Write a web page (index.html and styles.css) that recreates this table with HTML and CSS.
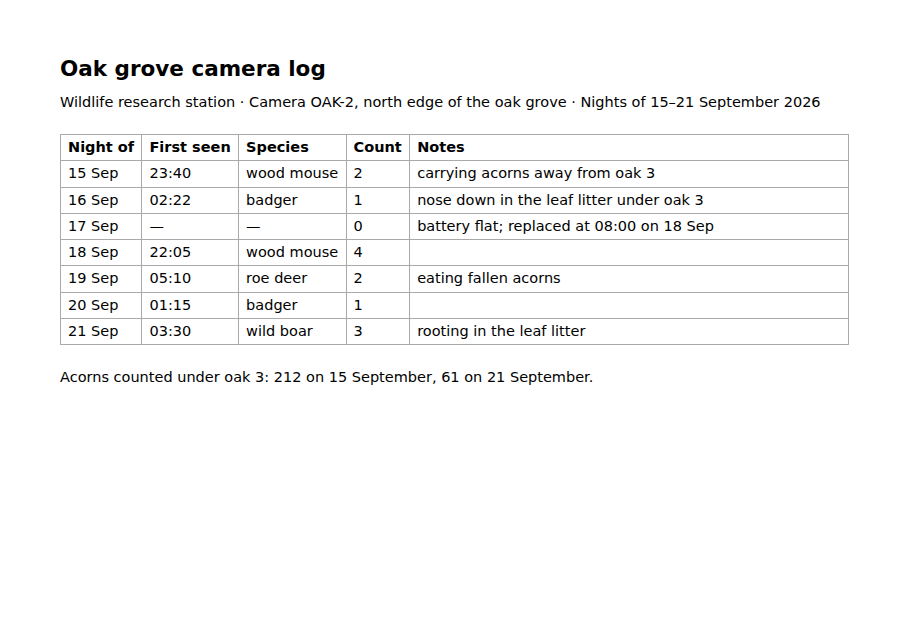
FILE: index.html
```html
<!DOCTYPE html>
<html lang="en">
<head>
<meta charset="utf-8">
<title>Oak grove camera log</title>
<link rel="stylesheet" href="styles.css">
</head>
<body>
<main class="page">
  <h1 class="title">Oak grove camera log</h1>
  <p class="subtitle">Wildlife research station · Camera OAK-2, north edge of the oak grove · Nights of 15–21 September 2026</p>
  <table class="log">
    <thead>
      <tr><th class="fit">Night of</th><th class="fit">First seen</th><th class="fit">Species</th><th class="fit">Count</th><th>Notes</th></tr>
    </thead>
    <tbody>
      <tr><td>15 Sep</td><td>23:40</td><td>wood mouse</td><td>2</td><td>carrying acorns away from oak 3</td></tr>
      <tr><td>16 Sep</td><td>02:22</td><td>badger</td><td>1</td><td>nose down in the leaf litter under oak 3</td></tr>
      <tr><td>17 Sep</td><td>—</td><td>—</td><td>0</td><td>battery flat; replaced at 08:00 on 18 Sep</td></tr>
      <tr><td>18 Sep</td><td>22:05</td><td>wood mouse</td><td>4</td><td></td></tr>
      <tr><td>19 Sep</td><td>05:10</td><td>roe deer</td><td>2</td><td>eating fallen acorns</td></tr>
      <tr><td>20 Sep</td><td>01:15</td><td>badger</td><td>1</td><td></td></tr>
      <tr><td>21 Sep</td><td>03:30</td><td>wild boar</td><td>3</td><td>rooting in the leaf litter</td></tr>
    </tbody>
  </table>
  <p class="footnote">Acorns counted under oak 3: 212 on 15 September, 61 on 21 September.</p>
</main>
</body>
</html>
```
FILE: styles.css
```css
html, body {
  margin: 0;
  padding: 0;
  background: #fff;
}
body {
  font-family: "DejaVu Sans", sans-serif;
  font-size: 14.5px;
  color: #000;
}
.page {
  padding: 56px 61px 0 60px;
}
.title {
  font-size: 21.5px;
  font-weight: bold;
  line-height: 26px;
  margin: 0 0 12px 0;
}
.subtitle {
  line-height: 17px;
  margin: 0 0 23px 0;
}
.log {
  width: 100%;
  border-collapse: collapse;
}
.log th, .log td {
  border: 1px solid #aaa;
  padding: 4px 7.4px 4px 7px;
  line-height: 17.25px;
  text-align: left;
  vertical-align: top;
  white-space: nowrap;
}
.log th.fit {
  width: 1%;
}
.log th {
  font-weight: bold;
}
.footnote {
  line-height: 17px;
  margin: 24px 0 0 0;
}
```
